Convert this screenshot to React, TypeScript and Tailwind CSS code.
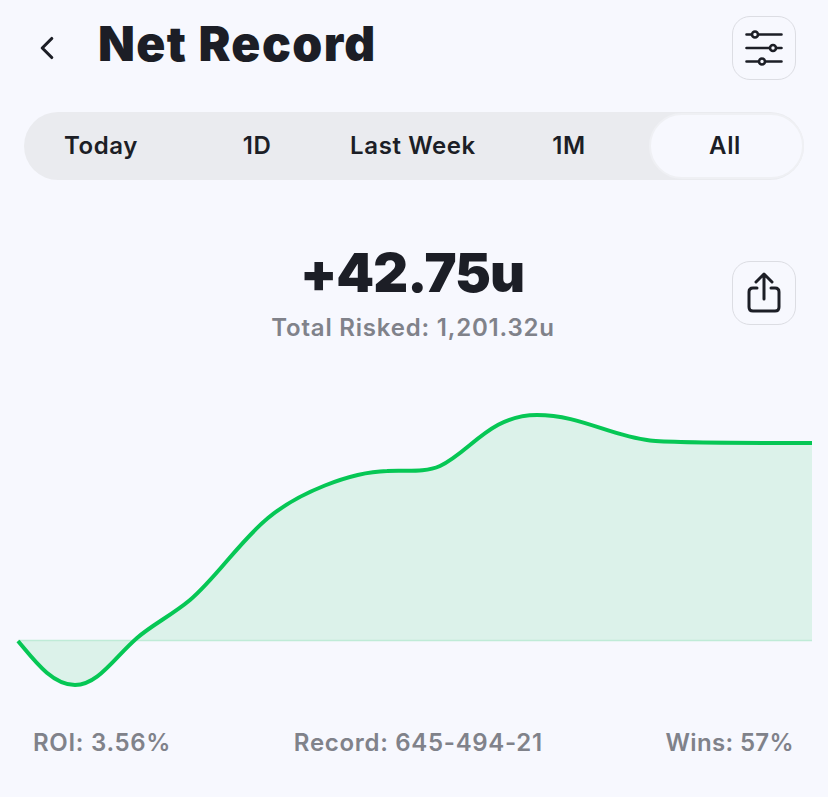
import { ChevronLeft } from "lucide-react";

const tabs = ["Today", "1D", "Last Week", "1M", "All"];

const curve =
  "M18 641 C34 660 52 685 75 685 C98 685 114 658 137 638 C152 625 172 615 190 600 C216 578 240 541 268 518 C298 493 350 472 387 471 C405 470 425 473 440 466 C470 452 490 415 537 415 C580 415 610 436 650 440.5 C672 443 760 443 812 443";

const FilterIcon = () => (
  <svg width="38" height="38" viewBox="0 0 38 38" fill="none" stroke="#1c1e26" strokeWidth="2.6" strokeLinecap="round">
    <path d="M1.500 5.500H6.500M13.500 5.500H36.500M1.500 19H24.500M31.500 19H36.500M1.500 32.500H13.500M20.500 32.500H36.500" />
    <circle cx="10" cy="5.500" r="3" />
    <circle cx="28" cy="19" r="3" />
    <circle cx="17" cy="32.500" r="3" />
  </svg>
);

const ShareIcon = () => (
  <svg width="34" height="44" viewBox="0 0 34 44" fill="none" stroke="#1c1e26" strokeWidth="3" strokeLinecap="round" strokeLinejoin="round">
    <path d="M17 28V4M9 11L17 3L25 11" />
    <path d="M10 17H6C3.500 17 2 18.500 2 21V36C2 38.500 3.500 40 6 40H28C30.500 40 32 38.500 32 36V21C32 18.500 30.500 17 28 17H24" />
  </svg>
);

export default function App() {
  return (
    <div className="min-h-[797px] w-[828px] overflow-hidden bg-[#f7f8fe] font-['Inter',sans-serif] text-[#1c1e26]">
      {/* Header */}
      <div className="flex items-center pt-4 pr-8 pl-[28px]">
        <ChevronLeft size={38} strokeWidth={2} className="shrink-0" />
        <h1 className="ml-[32px] -mt-[8px] text-[48px] leading-[56px] font-black tracking-[1.4px]">Net Record</h1>
        <button className="ml-auto flex h-16 w-16 items-center justify-center rounded-[18px] border border-[#dcdde3]">
          <FilterIcon />
        </button>
      </div>

      {/* Range tabs */}
      <div className="mx-6 mt-8 grid h-[68px] w-[780px] grid-cols-5 rounded-[34px] bg-[#eaebef]">
        {tabs.map((t) => (
          <div
            key={t}
            className={
              t === "All"
                ? "my-px ml-px flex items-center justify-center rounded-[33px] border-2 border-[#eff0f4] bg-[#f7f8fe] pr-[3px] text-[24px] font-semibold tracking-[0.6px]"
                : "flex items-center justify-center pr-[2px] text-[24px] font-semibold tracking-[0.6px]"
            }
          >
            {t}
          </div>
        ))}
      </div>

      {/* Total */}
      <div className="mt-[57px] flex items-start px-8">
        <div className="w-16" />
        <div className="flex-1 pr-[2px] text-center">
          <div className="pr-[2px] text-[54px] leading-[72px] font-black tracking-[-1px]">+42.75u</div>
          <div className="mt-[4px] text-[24px] leading-[30px] font-semibold tracking-[0.8px] text-[#80828a]">Total Risked: 1,201.32u</div>
        </div>
        <button className="mt-[24px] flex h-16 w-16 items-center justify-center rounded-[18px] border border-[#dcdde3]">
          <ShareIcon />
        </button>
      </div>

      {/* Chart */}
      <svg className="mt-[37px] block" width="828" height="340" viewBox="0 380 828 340" fill="none">
        <path d={`${curve} L812 641 L18 641 Z`} fill="#dcf2ea" />
        <path d="M18 640.500H812" stroke="#bfebd7" strokeWidth="1.500" />
        <path d={curve} stroke="#06c755" strokeWidth="4" />
      </svg>

      {/* Stats */}
      <div className="mt-[8px] flex justify-between pr-[34px] pl-[33px] text-[24px] leading-[30px] font-semibold tracking-[0.7px] text-[#80828a]">
        <span>ROI: 3.56%</span>
        <span>Record: 645-494-21</span>
        <span className="tracking-[0.35px]">Wins: 57%</span>
      </div>
    </div>
  );
}
